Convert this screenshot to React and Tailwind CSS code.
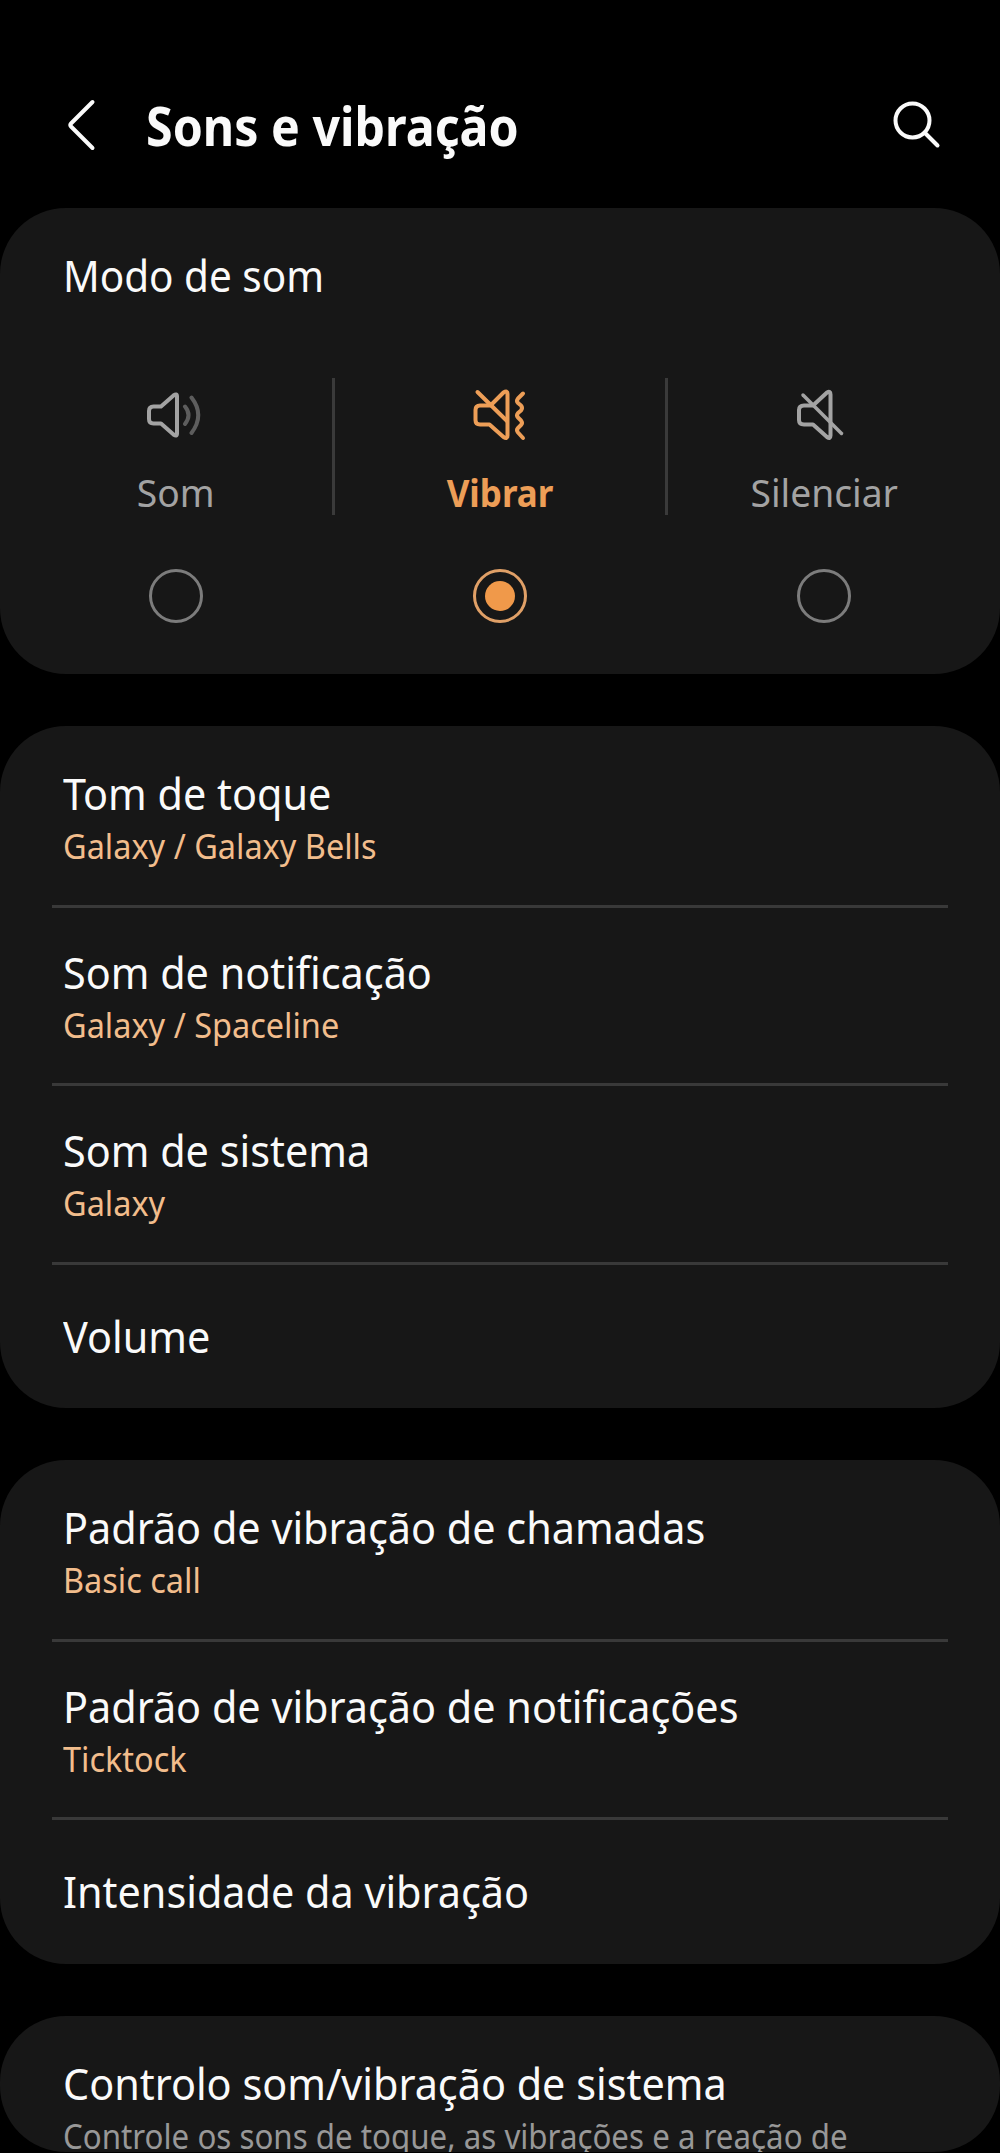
import React, { useState } from 'react'

const modes = [
  { id: 'som', label: 'Som', Icon: SoundIcon },
  { id: 'vibrar', label: 'Vibrar', Icon: VibrateIcon },
  { id: 'silenciar', label: 'Silenciar', Icon: MuteIcon },
]

const sounds = [
  { title: 'Tom de toque', value: 'Galaxy / Galaxy Bells' },
  { title: 'Som de notificação', value: 'Galaxy / Spaceline' },
  { title: 'Som de sistema', value: 'Galaxy' },
  { title: 'Volume' },
]

const vibrations = [
  { title: 'Padrão de vibração de chamadas', value: 'Basic call' },
  { title: 'Padrão de vibração de notificações', value: 'Ticktock' },
  { title: 'Intensidade da vibração' },
]

function SoundIcon() {
  return (
    <svg className="mr-[5px] shrink-0" width="58" height="54" viewBox="0 0 58 54" fill="none" stroke="currentColor" strokeWidth="4" strokeLinecap="round" strokeLinejoin="round">
      <path d="M16 18.500H8.500Q4 18.500 4 23V31Q4 35.500 8.500 35.500H16L28.500 46.500Q32 49 32 45.500V8.500Q32 5 28.500 7.500L16 18.500Z" />
      <path opacity="0.5" d="M40 18.500Q47 27 40 36M46.500 9.500Q60 27 46.500 45" />
    </svg>
  )
}

function VibrateIcon() {
  return (
    <svg className="shrink-0" width="58" height="54" viewBox="0 0 58 54" fill="none" stroke="currentColor" strokeWidth="4" strokeLinecap="round" strokeLinejoin="round">
      <path d="M19.500 17.500H9Q4.500 17.500 4.500 22V32Q4.500 36.500 9 36.500H18.500L32.500 49Q36.500 51.500 36.500 47.500V6Q36.500 2 32.500 4.500L19.500 17.500Z" />
      <path d="M6.500 4L36 33" />
      <path d="M52 5.500L47 10.500Q45 13 47 15L50 17.500Q52 20 50 22.500L47 25Q45 27.500 47 29.500L50 32.500Q52 35 50 37L47 40Q45 42 47 44.500L52 50" />
    </svg>
  )
}

function MuteIcon() {
  return (
    <svg className="mr-[6px] shrink-0" width="58" height="54" viewBox="0 0 58 54" fill="none" stroke="currentColor" strokeWidth="4" strokeLinecap="round" strokeLinejoin="round">
      <path d="M21 17.500H12Q7 17.500 7 22V32Q7 36.500 12 36.500H21L35 49Q38.500 51.500 38.500 47.500V6.500Q38.500 2.500 35 4.500L21 17.500Z" />
      <path strokeWidth="3.500" d="M11 7L49.500 45.500" />
    </svg>
  )
}

const Card = ({ children, className }) => (
  <section className={`rounded-[66px] bg-[#171717] ${className}`}>{children}</section>
)

const Title = ({ children, className = 'scale-x-94' }) => (
  <h2 className={`origin-left text-[44px] leading-[52px] whitespace-nowrap text-[#fafafa] ${className}`}>
    {children}
  </h2>
)

const SettingList = ({ items, className }) => (
  <Card className={`px-[52px] pt-[3px] ${className}`}>
    {items.map((item) => (
      <div
        key={item.title}
        className={`px-[11px] ${item.value ? 'h-[178.700px] border-b-3 border-[#393939] pt-[38px]' : 'pt-[44.500px]'}`}
      >
        <Title>{item.title}</Title>
        {item.value && (
          <p className="mt-[3px] origin-left scale-x-[0.955] text-[34px] leading-[48px] whitespace-nowrap text-[#f2bd8c]">
            {item.value}
          </p>
        )}
      </div>
    ))}
  </Card>
)

const App = () => {
  const [mode, setMode] = useState('vibrar')

  return (
    <div className="flex h-[2153px] w-[1000px] flex-col overflow-hidden bg-black font-['Noto_Sans','Open_Sans',sans-serif] [font-variant-ligatures:none]">
      {/* Header */}
      <header className="flex h-[208px] shrink-0 items-center pt-[42px] pr-[58px] pl-[66px]">
        <svg width="32" height="54" viewBox="0 0 32 54" fill="none" stroke="#fafafa" strokeWidth="4" strokeLinecap="round" strokeLinejoin="round">
          <path d="M26.500 4L5 25.500Q3.500 27 5 28.500L26.500 50" />
        </svg>
        <h1 className="ml-[48px] origin-left scale-x-[0.895] text-[54px] font-bold whitespace-nowrap text-[#fafafa]">
          Sons e vibração
        </h1>
        <svg className="ml-auto" width="50" height="50" viewBox="0 0 50 50" fill="none" stroke="#fafafa" strokeWidth="4" strokeLinecap="round">
          <circle cx="20.500" cy="20.500" r="17" />
          <path d="M33 33L45.500 45.500" />
        </svg>
      </header>

      <Card className="h-[466px] shrink-0 pt-[41px]">
        <div className="px-[63px]">
          <Title className="scale-x-92">Modo de som</Title>
        </div>
        <div className="mt-[77px] grid grid-cols-[312px_336px_312px] px-5">
          {modes.map(({ id, label, Icon }) => (
            <button key={id} onClick={() => setMode(id)} className="flex flex-col items-center">
              <span
                className={`flex h-[137px] w-full flex-col items-center pt-[10px] ${id === 'vibrar' ? 'border-x-3 border-[#3a3a3a]' : ''} ${mode === id ? 'font-bold text-[#ed9e57]' : 'text-[#a3a3a3]'}`}
              >
                <Icon />
                <span className={`mt-6 text-[38px] leading-[52px] ${mode === id ? 'scale-x-92' : 'scale-x-98'}`}>
                  {label}
                </span>
              </span>
              <span
                className={`mt-[54px] flex size-[54px] items-center justify-center rounded-full border-3 ${mode === id ? 'border-[#e0a067]' : 'border-[#7c7c7c]'}`}
              >
                {mode === id && <span className="size-[30px] rounded-full bg-[#f0994a]" />}
              </span>
            </button>
          ))}
        </div>
      </Card>

      <SettingList items={sounds} className="mt-[52px] h-[682px] shrink-0" />
      <SettingList items={vibrations} className="mt-[52px] h-[504px] shrink-0" />

      <Card className="mt-[52px] h-[136px] shrink-0 overflow-hidden px-[63px] pt-[41px]">
        <Title>Controlo som/vibração de sistema</Title>
        <p className="mt-[3px] origin-left scale-x-92 text-[34px] leading-[48px] whitespace-nowrap text-[#989898]">
          Controle os sons de toque, as vibrações e a reação de
        </p>
      </Card>
    </div>
  )
}

export default App
